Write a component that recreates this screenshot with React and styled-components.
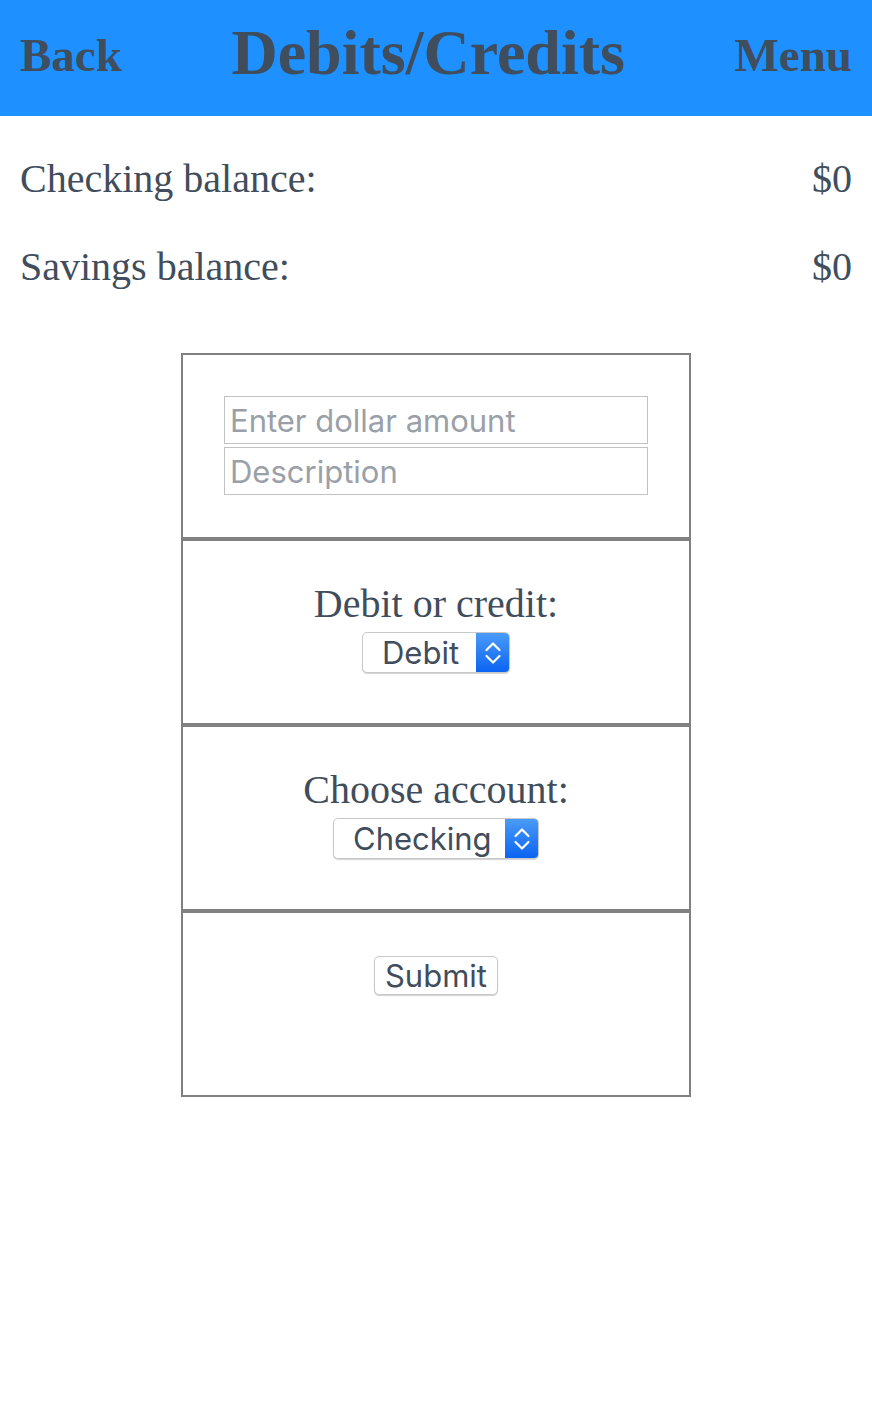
import React from "react";
import styled, { createGlobalStyle } from "styled-components";

const Colors = {
  header: "#1e90ff",
  text: "#3f4d5c",
  frame: "#808080",
  field: "#c2c2c2",
  placeholder: "#9aa0a8",
};

export default function App() {
  return (
    <>
      <GlobalStyle />
      <Header>
        <HeaderLink>Back</HeaderLink>
        <HeaderTitle>Debits/Credits</HeaderTitle>
        <HeaderLink>Menu</HeaderLink>
      </Header>
      <Balances>
        <BalanceRow>
          <span>Checking balance:</span>
          <span>$0</span>
        </BalanceRow>
        <BalanceRow>
          <span>Savings balance:</span>
          <span>$0</span>
        </BalanceRow>
      </Balances>
      <Form>
        <Section>
          <Field placeholder="Enter dollar amount" />
          <Field placeholder="Description" />
        </Section>
        <Section>
          <Label>Debit or credit:</Label>
          <Dropdown $textWidth={113}>
            <option>Debit</option>
            <option>Credit</option>
          </Dropdown>
        </Section>
        <Section>
          <Label>Choose account:</Label>
          <Dropdown $textWidth={171}>
            <option>Checking</option>
            <option>Savings</option>
          </Dropdown>
        </Section>
        <Section $pad={43}>
          <SubmitButton>Submit</SubmitButton>
        </Section>
      </Form>
    </>
  );
}

function Dropdown({ children, $textWidth }) {
  return (
    <SelectWrap>
      <Select style={{ width: $textWidth }}>{children}</Select>
      <SelectArrow>
        <svg width="20" height="30" viewBox="0 0 20 30" fill="none">
          <path
            d="M3.5 12 L10 5.5 L16.5 12 M3.5 18 L10 24.5 L16.5 18"
            stroke="#fff"
            strokeWidth="2.2"
            strokeLinecap="round"
            strokeLinejoin="round"
          />
        </svg>
      </SelectArrow>
    </SelectWrap>
  );
}

const GlobalStyle = createGlobalStyle`
body {
  margin: 0;
  background: #fff;
  color: ${Colors.text};
  font-family: "Liberation Serif", "Times New Roman", serif;
}
`;

const Header = styled.header`
height: 116px;
background-color: ${Colors.header};
display: flex;
justify-content: space-between;
align-items: center;
padding: 0 20px;
box-sizing: border-box;
`;
const HeaderLink = styled.span`
font-size: 47px;
font-weight: 700;
padding-bottom: 6px;
`;
const HeaderTitle = styled.h1`
font-size: 64px;
font-weight: 700;
margin: 0;
padding-bottom: 10px;
`;

const Balances = styled.div`
padding: 18px 20px 0;
`;
const BalanceRow = styled.div`
height: 88px;
display: flex;
justify-content: space-between;
align-items: center;
font-size: 40px;
`;

const Form = styled.div`
width: 510px;
margin: 43px auto 0;
`;
const Section = styled.section`
box-sizing: border-box;
height: 186px;
border: 2px solid ${Colors.frame};
padding-top: ${(p) => p.$pad || 41}px;
display: flex;
flex-direction: column;
align-items: center;
gap: 3px;
`;
const Field = styled.input`
box-sizing: border-box;
width: 424px;
height: 48px;
border: 1px solid ${Colors.field};
padding: 0 5px;
font-family: Inter, "Liberation Sans", sans-serif;
font-size: 31px;
color: ${Colors.text};
outline: none;
&::placeholder {
  color: ${Colors.placeholder};
}
`;
const Label = styled.div`
font-size: 40px;
line-height: 44px;
margin-bottom: 3px;
`;
const SelectWrap = styled.div`
display: flex;
height: 39px;
border: 1px solid #c9c9c9;
border-radius: 5px;
overflow: hidden;
box-shadow: 0 1px 1px rgba(0, 0, 0, 0.18);
background: #fff;
`;
const Select = styled.select`
appearance: none;
border: none;
background: transparent;
padding: 0 0 0 19px;
font-family: Inter, "Liberation Sans", sans-serif;
font-size: 31px;
color: ${Colors.text};
outline: none;
`;
const SelectArrow = styled.div`
width: 33px;
display: flex;
align-items: center;
justify-content: center;
background: linear-gradient(#4a9bf8, #0b64f2);
`;
const SubmitButton = styled.button`
height: 39px;
padding: 0 10px;
border: 1px solid #c9c9c9;
border-radius: 5px;
background: #fff;
box-shadow: 0 1px 1px rgba(0, 0, 0, 0.18);
font-family: Inter, "Liberation Sans", sans-serif;
font-size: 31px;
color: ${Colors.text};
`;
